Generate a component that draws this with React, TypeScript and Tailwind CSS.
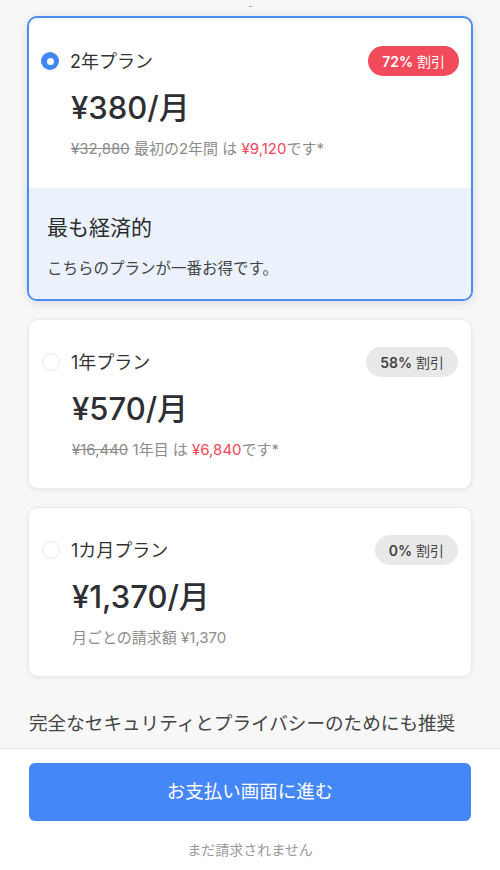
const font = "font-['Inter','Noto_Sans_CJK_JP',sans-serif]"

type Plan = {
  name: string
  price: string
  discount: string
  selected?: boolean
  sub: React.ReactNode
}

const plans: Plan[] = [
  {
    name: "2年プラン",
    price: "¥380/月",
    discount: "72%",
    selected: true,
    sub: (
      <>
        <s>¥32,880</s> 最初の2年間 は <span className="text-[#f0475a]">¥9,120</span>です*
      </>
    ),
  },
  {
    name: "1年プラン",
    price: "¥570/月",
    discount: "58%",
    sub: (
      <>
        <s>¥16,440</s> 1年目 は <span className="text-[#f0475a]">¥6,840</span>です*
      </>
    ),
  },
  {
    name: "1カ月プラン",
    price: "¥1,370/月",
    discount: "0%",
    sub: <>月ごとの請求額 ¥1,370</>,
  },
]

const Radio = ({ checked }: { checked?: boolean }) =>
  checked ? (
    <span className="flex h-[18px] w-[18px] items-center justify-center rounded-full bg-[#4387f6]">
      <span className="h-[7px] w-[7px] rounded-full bg-white"></span>
    </span>
  ) : (
    <span className="h-[18px] w-[18px] rounded-full border border-[#e8e8e8] bg-white"></span>
  )

const PlanCard = ({ plan }: { plan: Plan }) => {
  return (
    <div
      className={
        plan.selected
          ? "overflow-hidden rounded-[10px] border-2 border-[#4b8bf5] bg-white shadow-[0_2px_10px_rgba(0,0,0,0.12)]"
          : "overflow-hidden rounded-[10px] border border-[#ececec] bg-white shadow-[0_1px_4px_rgba(0,0,0,0.08)] mx-[1px]"
      }
    >
      <div className={plan.selected ? "px-[12px] pt-[28px] pb-[29px]" : "px-[13px] pt-[27px] pb-[28px]"}>
        <div className="flex h-[30px] items-center justify-between">
          <div className="flex items-center gap-[11px]">
            <Radio checked={plan.selected} />
            <span className="text-[18px] text-[#333]">{plan.name}</span>
          </div>
          <span
            className={
              plan.selected
                ? "flex h-[30px] items-center rounded-full bg-[#f04a5b] px-[14px] text-[14px] font-semibold text-white"
                : "flex h-[30px] items-center rounded-full bg-[#e9e9e9] px-[14px] text-[14px] font-semibold text-[#444]"
            }
          >
            {plan.discount}<span className="ml-[4px] font-normal">割引</span>
          </span>
        </div>
        <div className="mt-[14px] pl-[30px] text-[31px] font-medium leading-[36px] text-[#2e2f33]">
          {plan.price}
        </div>
        <div className="mt-[13px] pl-[30px] text-[15px] leading-[20px] text-[#8c8c8c]">{plan.sub}</div>
      </div>
      {plan.selected && (
        <div className="bg-[#ebf2fe] px-[18px] pt-[26px] pb-[20px]">
          <div className="text-[21px] leading-[28px] text-[#2a2a2a]">最も経済的</div>
          <div className="mt-[17px] text-[15.5px] leading-[20px] text-[#444]">こちらのプランが一番お得です。</div>
        </div>
      )}
    </div>
  )
}

export default function App() {
  return (
    <div className={`flex h-[870px] flex-col bg-[#f7f7f7] ${font}`}>
      <main className="flex-1 overflow-hidden px-[27px] pt-[6px]">
        <div className="mx-auto mb-[9px] h-[1px] w-[3px] bg-[#999]"></div>
        <div className="flex flex-col gap-[18px]">
          {plans.map((p) => (
            <PlanCard key={p.name} plan={p} />
          ))}
        </div>
        <p className="mt-[33px] whitespace-nowrap pl-[2px] text-[18.6px] leading-[26px] text-[#444]">
          完全なセキュリティとプライバシーのためにも推奨
        </p>
      </main>
      <footer className="h-[122px] border-t border-[#e6e6e6] bg-white px-[29px] pt-[14px]">
        <button className="flex h-[58px] w-full items-center justify-center rounded-[6px] bg-[#4587f7] text-[18.5px] text-white">
          お支払い画面に進む
        </button>
        <p className="mt-[20px] text-center text-[14px] leading-[18px] text-[#999]">まだ請求されません</p>
      </footer>
    </div>
  )
}
